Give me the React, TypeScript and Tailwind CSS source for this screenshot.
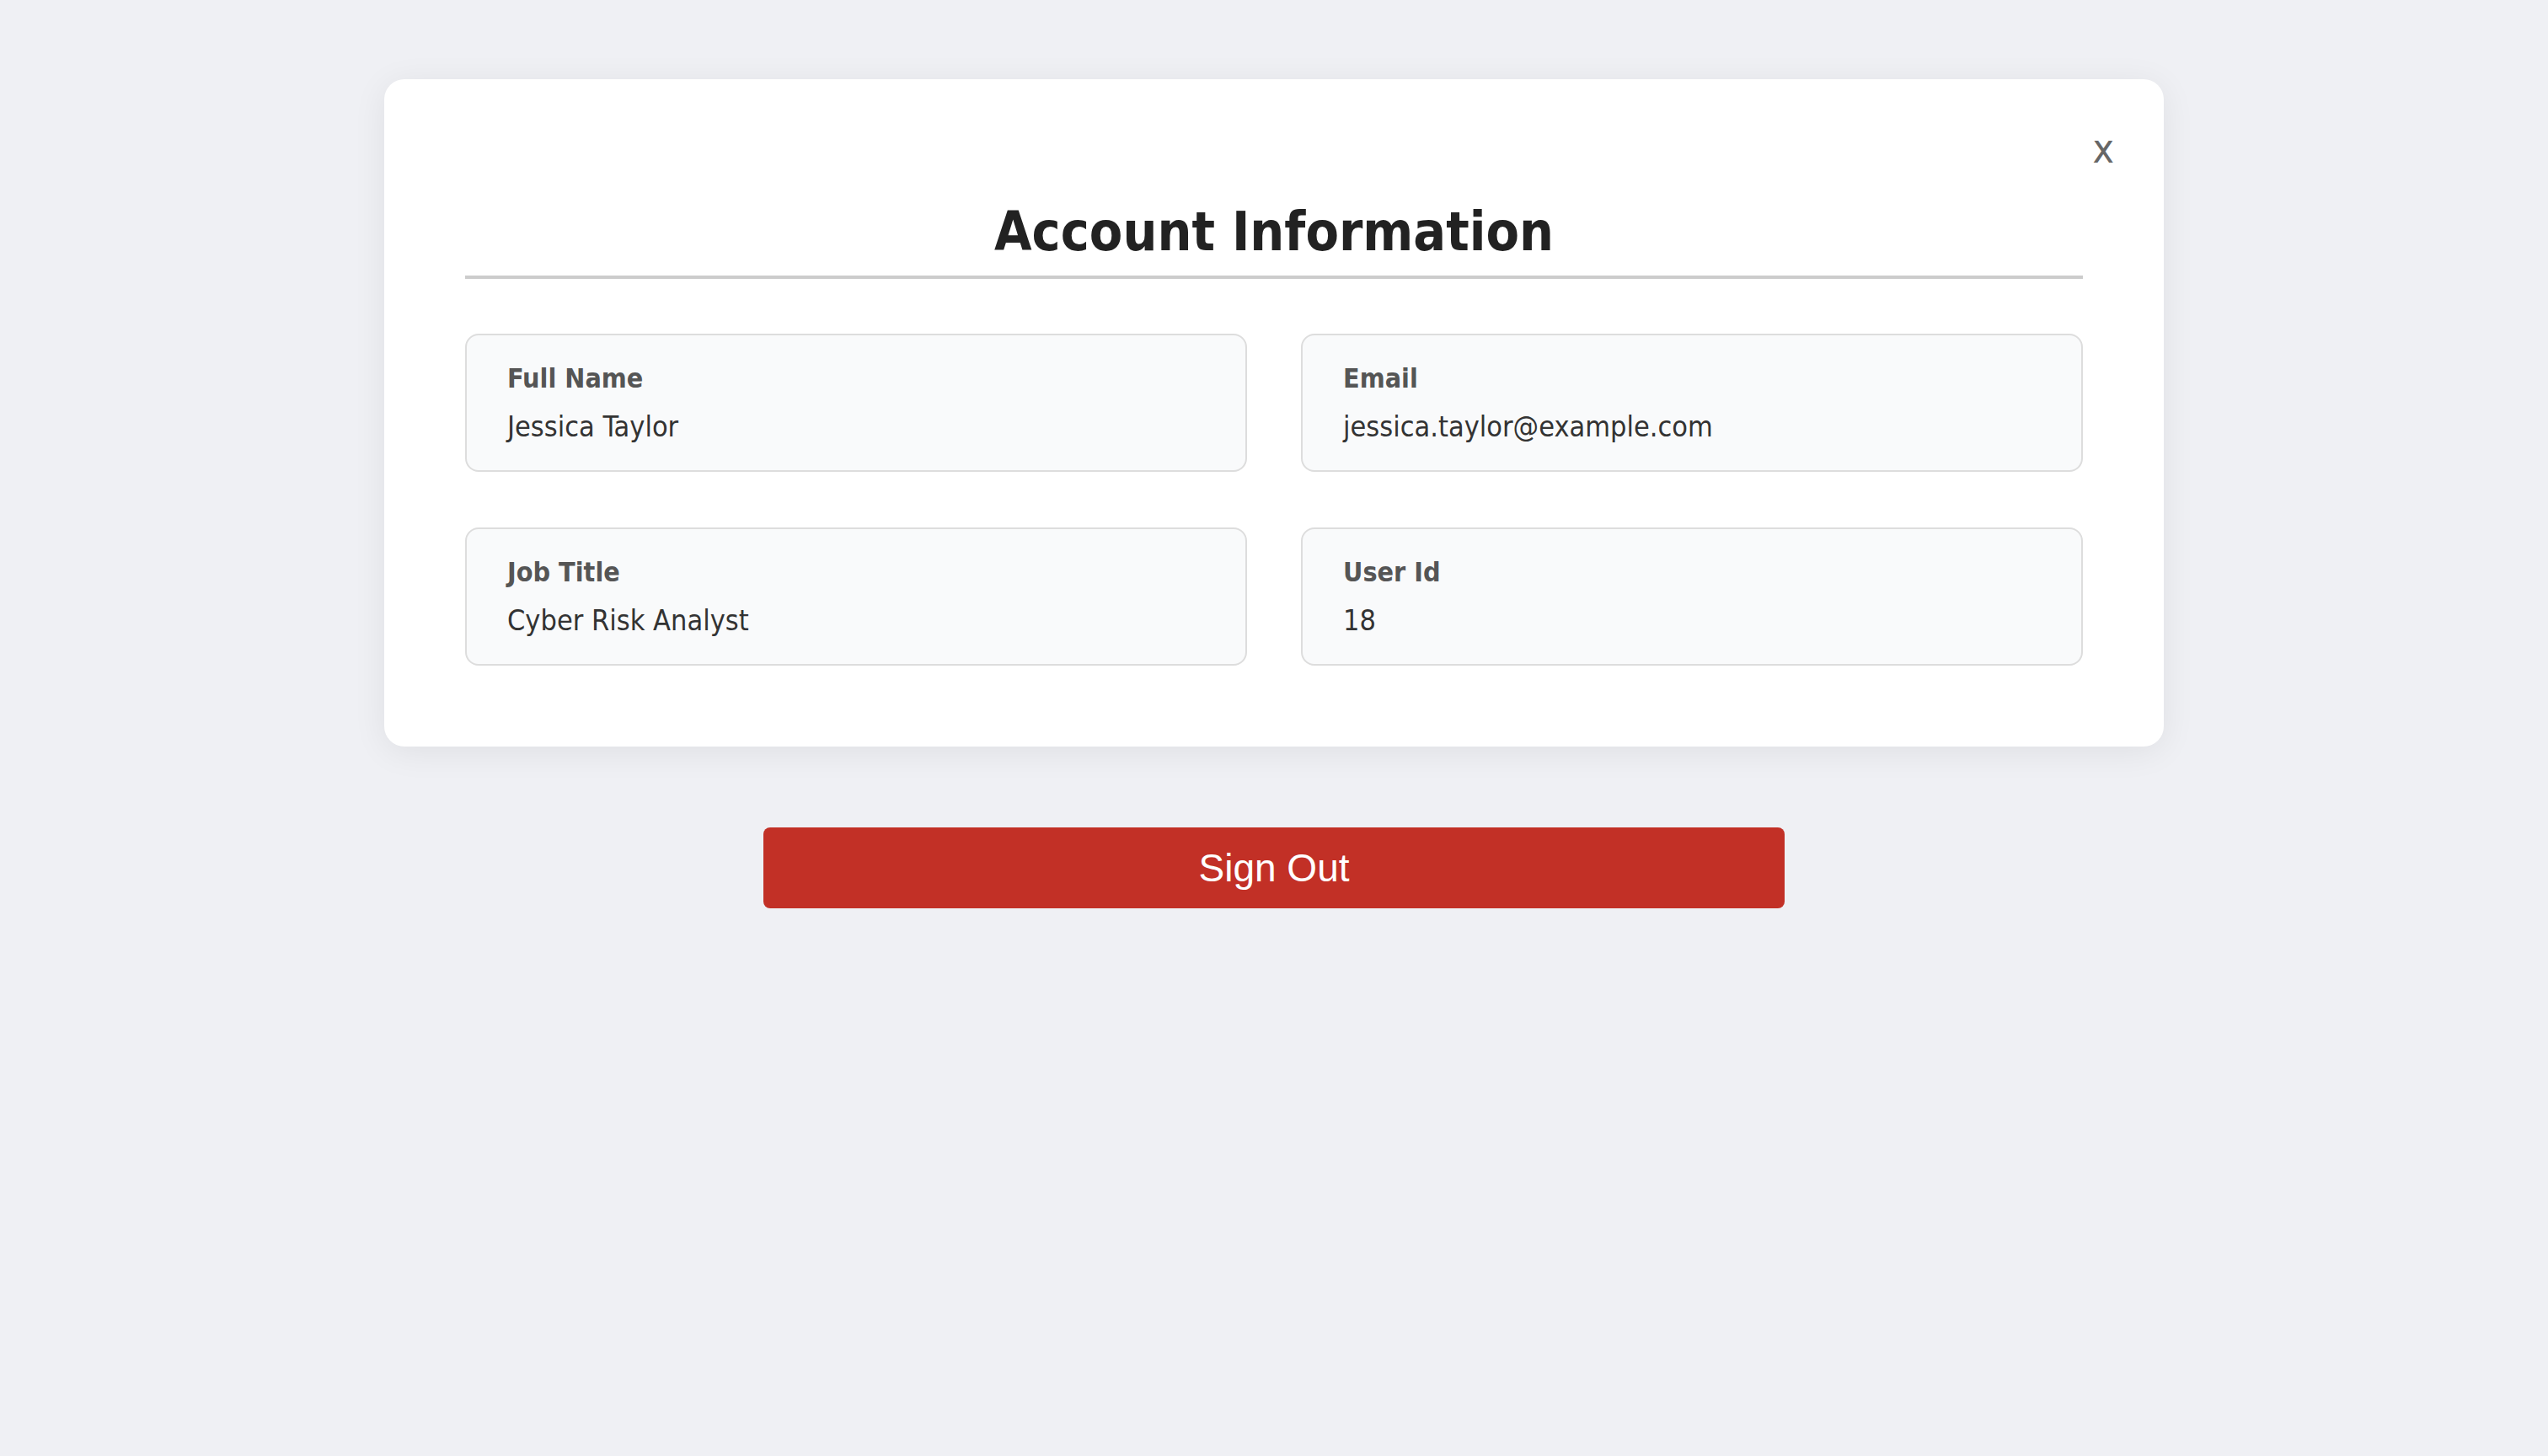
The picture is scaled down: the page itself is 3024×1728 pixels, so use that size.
const fields = [
  { label: "Full Name", value: "Jessica Taylor" },
  { label: "Email", value: "jessica.taylor@example.com" },
  { label: "Job Title", value: "Cyber Risk Analyst" },
  { label: "User Id", value: "18" },
];

function InfoField({ label, value }: { label: string; value: string }) {
  return (
    <div className="rounded-[16px] border-2 border-[#dddddd] bg-[#f9fafb] px-[48px] pt-[31px] pb-[30px]">
      <p className="text-[32px] leading-[40px] font-bold text-[#555555]">{label}</p>
      <p className="mt-[15px] text-[34px] leading-[44px] text-[#333333]">{value}</p>
    </div>
  );
}

export default function App() {
  return (
    <main className="flex min-h-screen flex-col items-center bg-[#eff0f4] pt-[94px] font-['DejaVu_Sans_Condensed','DejaVu_Sans',sans-serif] font-stretch-condensed">
      <section className="relative w-[2112px] rounded-[24px] bg-white px-[96px] pt-[149px] pb-[96px] shadow-[0_6px_40px_rgba(0,0,0,0.07)]">
        <button
          type="button"
          className="absolute top-[58px] right-[59px] text-[48px] leading-[48px] text-[#666666]"
        >
          x
        </button>
        <h2 className="border-b-4 border-[#cccccc] pb-[20px] text-center text-[64px] leading-[64px] font-bold text-[#222222]">
          Account Information
        </h2>
        <div className="mt-[65px] grid grid-cols-2 gap-x-[64px] gap-y-[66px]">
          {fields.map((field) => (
            <InfoField key={field.label} label={field.label} value={field.value} />
          ))}
        </div>
      </section>

      <button
        type="button"
        className="mt-[96px] h-[96px] w-[1212px] rounded-[8px] bg-[#c23026] font-['Liberation_Sans',Arial,sans-serif] text-[46px] text-white"
      >
        Sign Out
      </button>
    </main>
  );
}
